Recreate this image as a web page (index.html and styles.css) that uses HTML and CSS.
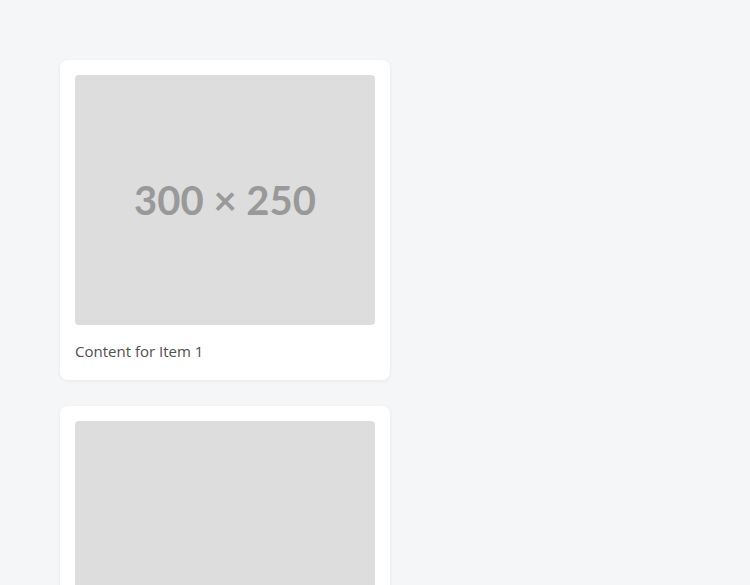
FILE: index.html
```html
<!DOCTYPE html>
<html>
<head>
<meta charset="utf-8">
<link rel="stylesheet" href="styles.css">
</head>
<body>
<div class="list">
  <div class="card">
    <div class="thumb">300 × 250</div>
    <p class="caption">Content for Item 1</p>
  </div>
  <div class="card">
    <div class="thumb"></div>
    <p class="caption">Content for Item 2</p>
  </div>
</div>
</body>
</html>
```
FILE: styles.css
```css
html, body {
  margin: 0;
  padding: 0;
  background: #f5f6f8;
  font-family: "Open Sans", "Noto Sans", sans-serif;
}
.list {
  display: flex;
  flex-direction: column;
  align-items: flex-start;
  gap: 26px;
  padding: 60px;
}
.card {
  width: 300px;
  padding: 15px;
  background: #ffffff;
  border-radius: 8px;
  box-shadow: 0 1px 4px rgba(0, 0, 0, 0.06);
}
.thumb {
  width: 300px;
  height: 250px;
  background: #dddddd;
  border-radius: 4px;
  display: flex;
  align-items: center;
  justify-content: center;
  color: #999999;
  font-family: Lato, "Open Sans", sans-serif;
  font-weight: 700;
  font-size: 40px;
}
.caption {
  margin: 13px 0 1px;
  font-size: 15px;
  line-height: 26px;
  color: #505050;
}
```
